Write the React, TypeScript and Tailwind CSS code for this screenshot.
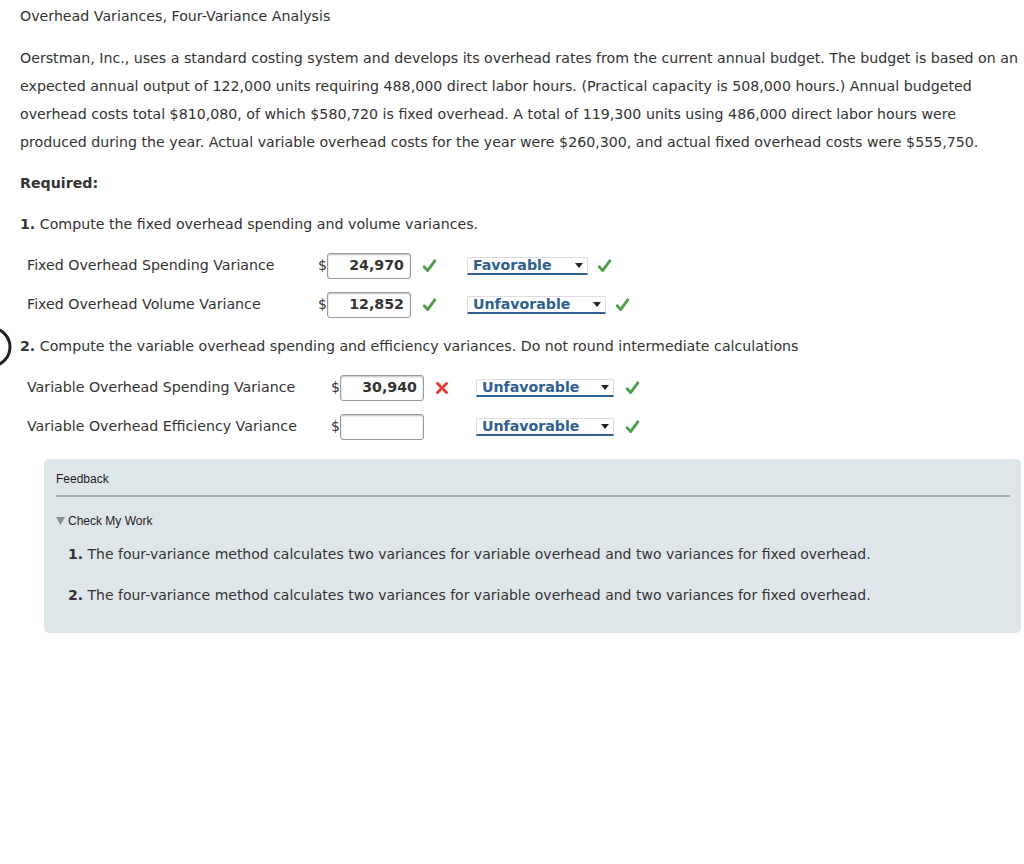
import React from 'react';

const FONT = { fontFamily: '"DejaVu Sans", Verdana, sans-serif' };
const ARIAL = { fontFamily: '"Liberation Sans", Arial, sans-serif' };

function Check() {
  return (
    <svg width="15" height="14" viewBox="0 0 15 14" className="shrink-0">
      <path d="M2.2 7.8 L5.6 11.6 L12.8 1.8" fill="none" stroke="#4d9f44" strokeWidth="2.8" strokeLinecap="round" strokeLinejoin="round" />
    </svg>
  );
}

function Cross() {
  return (
    <svg width="12" height="12" viewBox="0 0 12 12" className="shrink-0">
      <path d="M1.5 1.5 L10.5 10.5 M10.5 1.5 L1.5 10.5" stroke="#e53a2f" strokeWidth="2.8" strokeLinecap="square" />
    </svg>
  );
}

function Amount({ value }: { value?: string }) {
  return (
    <div className="flex items-center">
      <span className="text-[14px] text-[#333]">$</span>
      <div className="w-[84px] h-[26px] border border-[#999] rounded-[3px] bg-white shadow-[inset_0_1px_2px_rgba(0,0,0,0.25)] flex items-center justify-end pr-[6px] text-[14.2px] font-bold text-[#333]">
        {value}
      </div>
    </div>
  );
}

function Choice({ label, width }: { label: string; width: string }) {
  return (
    <div className={`${width} h-[18px] flex items-center justify-between border border-[#ddd] border-b-2 border-b-[#2f5f93] rounded-t-[2px] pl-[5px] pr-[4px] bg-white`}>
      <span className="text-[14.2px] font-bold text-[#2f5f93] leading-none">{label}</span>
      <svg width="8" height="5" viewBox="0 0 8 5"><path d="M0 0 L8 0 L4 5 Z" fill="#222" /></svg>
    </div>
  );
}

type Row = { label: string; value?: string; ok: boolean; choice: string; cw: string };

function AnswerRow({ r, labelW, markW, gapAfter }: { r: Row; labelW: string; markW: string; gapAfter: string }) {
  return (
    <div className="flex items-center h-[39px]">
      <div className={`${labelW} text-[14.2px] text-[#333]`}>{r.label}</div>
      <Amount value={r.value} />
      <div className={`${markW} pl-[11px] flex items-center`}>
        {r.value ? (r.ok ? <Check /> : <div className="pl-[1px]"><Cross /></div>) : null}
      </div>
      <Choice label={r.choice} width={r.cw} />
      <div className={gapAfter}>
        <Check />
      </div>
    </div>
  );
}

export default function App() {
  const part1: Row[] = [
    { label: 'Fixed Overhead Spending Variance', value: '24,970', ok: true, choice: 'Favorable', cw: 'w-[121px]' },
    { label: 'Fixed Overhead Volume Variance', value: '12,852', ok: true, choice: 'Unfavorable', cw: 'w-[139px]' },
  ];
  const part2: Row[] = [
    { label: 'Variable Overhead Spending Variance', value: '30,940', ok: false, choice: 'Unfavorable', cw: 'w-[138px]' },
    { label: 'Variable Overhead Efficiency Variance', value: undefined, ok: true, choice: 'Unfavorable', cw: 'w-[138px]' },
  ];

  return (
    <div className="relative min-h-[864px] bg-white text-[#333]" style={FONT}>
      {/* partial circle peeking in at the left edge */}
      <svg className="absolute left-0 top-[324px]" width="14" height="46" viewBox="0 0 14 46">
        <circle cx="-9" cy="23" r="19" fill="none" stroke="#222" strokeWidth="3" />
      </svg>

      <div className="pl-[20px] pr-[4px] pt-[6px]">
        <div className="text-[14.2px] leading-[20px]">Overhead Variances, Four-Variance Analysis</div>

        <p className="mt-[18px] text-[14.2px] leading-[28px]">
          Oerstman, Inc., uses a standard costing system and develops its overhead rates from the current annual budget. The budget is based on an expected annual output of 122,000 units requiring 488,000 direct labor hours. (Practical capacity is 508,000 hours.) Annual budgeted overhead costs total $810,080, of which $580,720 is fixed overhead. A total of 119,300 units using 486,000 direct labor hours were produced during the year. Actual variable overhead costs for the year were $260,300, and actual fixed overhead costs were $555,750.
        </p>

        <div className="mt-[13px] text-[14.2px] font-bold leading-[28px]">Required:</div>

        <div className="mt-[13px] text-[14.2px] leading-[28px]">
          <span className="font-bold">1.</span> Compute the fixed overhead spending and volume variances.
        </div>

        <div className="mt-[8px] pl-[7px]">
          {part1.map((r) => (
            <AnswerRow key={r.label} r={r} labelW="w-[291px]" markW="w-[56px]" gapAfter="pl-[9px]" />
          ))}
        </div>

        <div className="mt-[8px] text-[14.2px] leading-[28px]">
          <span className="font-bold">2.</span> Compute the variable overhead spending and efficiency variances. Do not round intermediate calculations
        </div>

        <div className="mt-[8px] pl-[7px]">
          {part2.map((r) => (
            <AnswerRow key={r.label} r={r} labelW="w-[304px]" markW="w-[52px]" gapAfter="pl-[11px]" />
          ))}
        </div>

        <div className="mt-[13px] ml-[24px] mr-[-1px] bg-[#dfe6ea] rounded-[5px] pl-[12px] pr-[11px] pt-[12px] pb-[24px]">
          <div className="text-[12px] text-[#222] leading-[16px] pb-[8px] border-b-2 border-[#a9adb0]" style={ARIAL}>Feedback</div>
          <div className="mt-[16px] flex items-center text-[12px] text-[#222] leading-[16px]" style={ARIAL}>
            <svg width="9" height="8" viewBox="0 0 9 8" className="mr-[3px]"><path d="M0 0 L9 0 L4.5 8 Z" fill="#8a8d90" /></svg>
            Check My Work
          </div>
          <div className="pl-[12px] text-[14px] leading-[28px] text-[#333]">
            <div className="mt-[11px]"><span className="font-bold">1.</span> The four-variance method calculates two variances for variable overhead and two variances for fixed overhead.</div>
            <div className="mt-[13px]"><span className="font-bold">2.</span> The four-variance method calculates two variances for variable overhead and two variances for fixed overhead.</div>
          </div>
        </div>
      </div>
    </div>
  );
}
